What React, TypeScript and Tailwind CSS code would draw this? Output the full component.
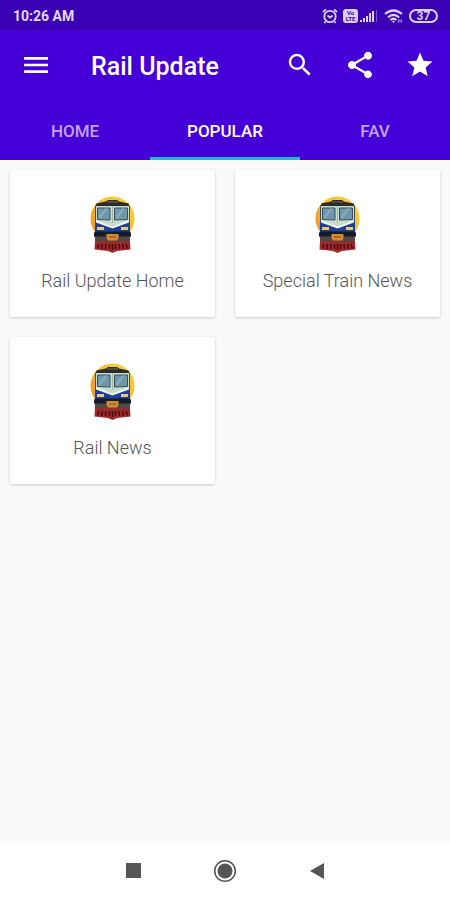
import React, { useState } from 'react';
import { MdMenu, MdSearch, MdShare, MdStar } from 'react-icons/md';

type Tab = 'home' | 'popular' | 'fav';

const tabs: { id: Tab; label: string }[] = [
  { id: 'home', label: 'HOME' },
  { id: 'popular', label: 'POPULAR' },
  { id: 'fav', label: 'FAV' },
];

const cards = ['Rail Update Home', 'Special Train News', 'Rail News'];

const TrainIcon: React.FC = () => (
  <svg viewBox="0 0 45 58" className="w-[45px] h-[58px]" aria-hidden="true">
    <defs>
      <linearGradient id="sun" x1="0" y1="1" x2="1" y2="0">
        <stop offset="0" stopColor="#f08a1d" />
        <stop offset="0.6" stopColor="#fbc02d" />
        <stop offset="1" stopColor="#fdd24a" />
      </linearGradient>
    </defs>
    <circle cx="22.5" cy="22.5" r="22" fill="url(#sun)" />
    {/* roof */}
    <path d="M5 11 L6.5 7.5 L16 5.5 L18 4 H27 L29 5.5 L38.500 7.500 L40 11 V13 H5z" fill="#2b2b2d" />
    <path d="M17 6h11" stroke="#77705c" strokeWidth="1" />
    {/* cab */}
    <path d="M5 10 H40 V34 H5z" fill="#414a4c" />
    <path d="M6 10 H39 V26 L22.500 33 L6 26z" fill="#c9dccb" />
    <path d="M7.500 12 H20 V24 L7.500 23.500z" fill="#6f97ac" stroke="#38505c" strokeWidth="1" />
    <path d="M24.500 12 H37.500 V23.500 L24.500 24z" fill="#6f97ac" stroke="#38505c" strokeWidth="1" />
    <path d="M9 20 L15 12.500 H18 L10 23z M26 20 L32 12.500 H35 L27 23z" fill="#86abbb" />
    <path d="M22.500 10 V27" stroke="#9fb5a8" strokeWidth="1" />
    <path d="M5 25 L22.500 32 L40 25 V36 H5z" fill="#1d3f97" />
    <path d="M6 24 L22.500 30.500 L39 24 V26.500 L22.500 32.500 L6 26.500z" fill="#eef6ee" />
    <rect x="7" y="31" width="7" height="3" fill="#f0c673" />
    <rect x="31" y="31" width="7" height="3" fill="#f0c673" />
    {/* buffers */}
    <rect x="4" y="35.500" width="37" height="6" rx="2" fill="#171c2b" />
    <rect x="5" y="40.500" width="35" height="5.500" fill="#504a44" />
    <path d="M16.500 38 H28.500 V42 L27 44.500 H18 L16.500 42z" fill="#d98a2b" />
    <path d="M19 41h7" stroke="#7c4a1b" strokeWidth="1" />
    {/* cowcatcher */}
    <path d="M5 45.500 H40 L40.500 53.500 L27 55 L22.500 57 L18 55 L4.500 53.500z" fill="#a3262b" />
    <path
      d="M9 48 L7.500 52.500 M12.500 48 L11.500 53 M16 48 L15.500 53 M19.500 48 V53 M22.500 48 V54 M25.500 48 V53 M29 48 L29.500 53 M32.500 48 L33.500 53 M36 48 L37.500 52.500"
      stroke="#3f1013"
      strokeWidth="1.500"
    />
  </svg>
);

const StatusIcons: React.FC = () => (
  <div className="flex items-center text-[#ddd0f7]">
    <svg viewBox="0 0 16 16" className="w-4 h-4 mr-[5px]" fill="none" stroke="currentColor" strokeWidth="1.800" aria-hidden="true">
      <circle cx="8" cy="8.500" r="5.700" />
      <path d="M1 4 L4 1.300 M15 4 L12 1.300 M5.500 7.500 L8 9.500 L10.500 7.500 M3.500 13.500 L2.500 15 M12.500 13.500 L13.500 15" />
    </svg>
    <div className="w-[15px] h-[14px] mr-[2px] rounded-[3px] bg-[#ddd0f7] text-[#3a00b3] text-[6px] leading-[6px] font-bold text-center flex flex-col justify-center">
      <span>Vo</span>
      <span>LTE</span>
    </div>
    <svg viewBox="0 0 18 14" className="w-[18px] h-[14px] mr-[6px]" fill="currentColor" aria-hidden="true">
      <path d="M0 11h2v2H0z M3 9h2v4H3z M6 7h2v6H6z M9 4h2v9H9z M12 2h2v11h-2z" />
      <path d="M16 1h1v12h-1z" opacity="0.400" />
    </svg>
    <svg viewBox="0 0 20 14" className="w-5 h-[14px] mr-[5px]" fill="none" stroke="currentColor" strokeWidth="2.200" aria-hidden="true">
      <path d="M1 5 Q9.500 -2 18 5 M4 8.300 Q9.500 3.500 15 8.300 M6.500 11 Q9.500 8.500 12.500 11" />
      <path d="M8 12 h3 l-1.500 2z" fill="currentColor" stroke="none" />
      <path d="M14 10.500h1.500v3H14z M16.500 10.500H18v3h-1.500z" fill="currentColor" stroke="none" opacity="0.700" />
    </svg>
    <div className="w-[29px] h-[14px] rounded-full border-2 border-[#ddd0f7] flex items-center justify-center text-xs leading-[10px] font-bold">
      37
    </div>
  </div>
);

const App: React.FC = () => {
  const [activeTab, setActiveTab] = useState<Tab>('popular');

  return (
    <div className="min-h-screen flex flex-col bg-[#fafafa] font-[Roboto,sans-serif]">
      <div className="h-[30px] pl-[13px] pr-[12px] pt-px flex items-center justify-between bg-[#3a00b3]">
        <span className="text-sm font-bold text-[#e2d8f8]">10:26 AM</span>
        <StatusIcons />
      </div>

      <header className="bg-[#4500d8] text-white">
        <div className="h-[70px] pl-5 pr-[14px] flex items-center">
          <button aria-label="Menu" className="w-8 h-8 flex items-center justify-center">
            <MdMenu size={32} />
          </button>
          <h1 className="ml-[39px] pt-1 flex-1 text-[25px] leading-8 font-medium">Rail Update</h1>
          <div className="flex items-center gap-7">
            <button aria-label="Search" className="w-8 h-8 flex items-center justify-center">
              <MdSearch size={30} />
            </button>
            <button aria-label="Share" className="w-8 h-8 flex items-center justify-center">
              <MdShare size={32} />
            </button>
            <button aria-label="Favourite" className="w-8 h-8 flex items-center justify-center">
              <MdStar size={30} />
            </button>
          </div>
        </div>

        <nav className="grid grid-cols-3">
          {tabs.map((tab) => (
            <button
              key={tab.id}
              onClick={() => setActiveTab(tab.id)}
              className={`${
                activeTab === tab.id ? 'border-[#22b8d6] text-white' : 'border-transparent text-[#c3a6f3]'
              } h-[60px] pt-1.5 border-b-3 text-[17px] font-medium`}
            >
              {tab.label}
            </button>
          ))}
        </nav>
      </header>

      <main className="flex-1 p-[10px] grid grid-cols-2 gap-5 content-start">
        {cards.map((title) => (
          <a
            key={title}
            href="#"
            className="h-[147px] pt-[26px] flex flex-col items-center bg-white rounded-[2px] shadow-[0_1px_3px_rgba(0,0,0,0.2)]"
          >
            <TrainIcon />
            <span className="mt-[15px] text-lg leading-6 font-light text-[#555555]">{title}</span>
          </a>
        ))}
      </main>

      <footer className="h-[59px] flex items-center justify-center gap-[68px] bg-white text-[#555555]">
        <button aria-label="Recent apps" className="w-6 h-6 flex items-center justify-center">
          <span className="w-[15px] h-[15px] bg-[#555555]" />
        </button>
        <button aria-label="Home screen" className="w-6 h-6 flex items-center justify-center">
          <svg viewBox="0 0 24 24" className="w-6 h-6">
            <circle cx="12" cy="12" r="10.300" fill="none" stroke="currentColor" strokeWidth="1.500" />
            <circle cx="12" cy="12" r="7.500" fill="currentColor" />
          </svg>
        </button>
        <button aria-label="Back" className="w-6 h-6 flex items-center justify-center">
          <svg viewBox="0 0 24 24" className="w-6 h-6" fill="currentColor">
            <path d="M5 12 L19 4 V20z" />
          </svg>
        </button>
      </footer>
    </div>
  );
};

export default App;
